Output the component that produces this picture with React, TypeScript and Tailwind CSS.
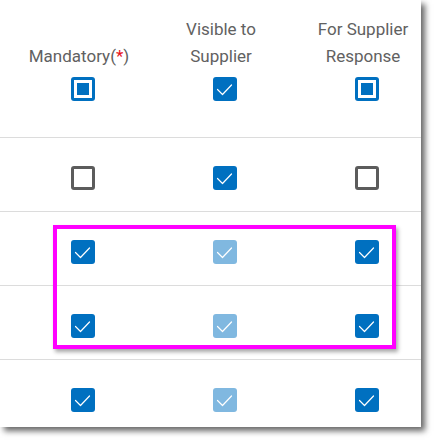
import { ReactNode } from "react";

type BoxKind = "checked" | "light" | "empty" | "partial";

const Check = () => (
  <svg viewBox="0 0 24 24" className="w-full h-full">
    <path
      d="M4.5 12.5 L9.5 17.5 L18.5 8"
      fill="none"
      stroke="#ffffff"
      strokeWidth="1.2"
      strokeLinecap="round"
      strokeLinejoin="round"
    />
  </svg>
);

const Box = ({ kind }: { kind: BoxKind }) => {
  if (kind === "empty")
    return (
      <div className="w-6 h-6 rounded-[3px] border-[3px] border-[#5c5c5c] bg-white" />
    );
  if (kind === "partial")
    return (
      <div className="w-6 h-6 rounded-[3px] bg-[#0070c0] p-[3px]">
        <div className="w-full h-full bg-white p-[3px]">
          <div className="w-full h-full bg-[#0070c0]" />
        </div>
      </div>
    );
  return (
    <div
      className={
        kind === "light"
          ? "w-6 h-6 rounded-[3px] bg-[#80b8e0]"
          : "w-6 h-6 rounded-[3px] bg-[#0070c0]"
      }
    >
      <Check />
    </div>
  );
};

const Cell = ({ children }: { children: ReactNode }) => (
  <div className="flex justify-center pl-[8px]">{children}</div>
);

const rows: BoxKind[][] = [
  ["empty", "checked", "empty"],
  ["checked", "light", "checked"],
  ["checked", "light", "checked"],
  ["checked", "light", "checked"],
];

export default function App() {
  return (
    <div
      className="relative w-[437px] h-[443px] bg-white overflow-hidden text-[#616161]"
      style={{ fontFamily: "Roboto, 'Liberation Sans', sans-serif" }}
    >
      <div className="w-[421px] h-[427px] bg-white shadow-[4px_4px_6px_rgba(0,0,0,0.6)]">
        {/* Header */}
        <div className="h-[138px] pt-[16px] border-b border-[#dcdcdc]">
          <div className="grid grid-cols-[142px_142px_142px] pl-[8px] text-[17px] leading-[27px] text-center">
            <div className="flex items-end justify-center h-[54px]">
              <span>
                Mandatory(<span className="text-[#e8101a]">*</span>)
              </span>
            </div>
            <div className="whitespace-nowrap">
              Visible to
              <br />
              Supplier
            </div>
            <div className="whitespace-nowrap">
              For Supplier
              <br />
              Response
            </div>
          </div>
          <div className="grid grid-cols-[142px_142px_142px] pl-[8px] mt-[7px]">
            <Cell>
              <Box kind="partial" />
            </Cell>
            <Cell>
              <Box kind="checked" />
            </Cell>
            <Cell>
              <Box kind="partial" />
            </Cell>
          </div>
        </div>

        {/* Rows */}
        {rows.map((row, i) => (
          <div
            key={i}
            className={
              i === rows.length - 1
                ? "h-[66px] pt-[28px]"
                : "h-[74px] pt-[28px] border-b border-[#dcdcdc]"
            }
          >
            <div className="grid grid-cols-[142px_142px_142px] pl-[8px]">
              {row.map((k, j) => (
                <Cell key={j}>
                  <Box kind={k} />
                </Cell>
              ))}
            </div>
          </div>
        ))}
      </div>

      {/* Highlight overlay */}
      <div className="absolute left-[53px] top-[225px] w-[343px] h-[124px] border-4 border-[#ff00ff] shadow-[2px_3px_4px_rgba(0,0,0,0.35)]" />
    </div>
  );
}
